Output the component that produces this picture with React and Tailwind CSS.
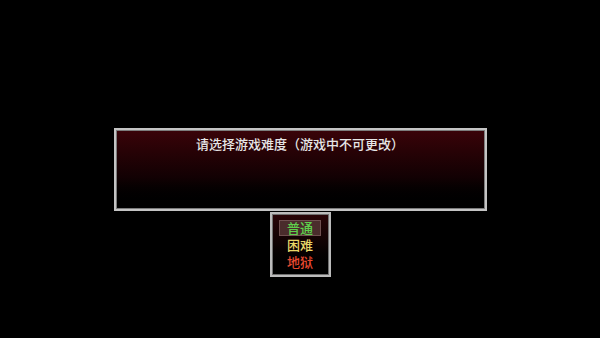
export default function App() {
  const cjk = { fontFamily: '"Noto Sans CJK SC", "Noto Sans", sans-serif' };
  return (
    <div className="w-[600px] h-[338px] bg-black flex flex-col items-center pt-[128px]" style={cjk}>
      <div className="w-[373px] h-[83px] border-2 border-[#c4c4c4] shadow-[inset_0_0_0_1px_#7c7c7c] bg-gradient-to-b from-[#3a0309] via-[#120103] via-60% to-black flex justify-center">
        <div className="text-[13px] leading-[15px] font-medium text-[#e6e6e6] mt-[6px]">请选择游戏难度（游戏中不可更改）</div>
      </div>
      <div className="mt-[1px] w-[61px] h-[65px] border-2 border-[#bcbcbc] shadow-[inset_0_0_0_1px_#707070] bg-gradient-to-b from-[#2a0508] via-[#0e0203] to-black flex flex-col items-center pt-[6px]">
        <div className="w-[42px] h-[16px] bg-[#4a2c2c] border border-[#705050] flex items-center justify-center text-[13px] leading-[14px] font-medium text-[#5fd04c]">普通</div>
        <div className="h-[17px] flex items-center text-[13px] leading-[14px] font-medium text-[#e8d868]">困难</div>
        <div className="h-[17px] flex items-center text-[13px] leading-[14px] font-medium text-[#e84a30]">地狱</div>
      </div>
    </div>
  );
}
